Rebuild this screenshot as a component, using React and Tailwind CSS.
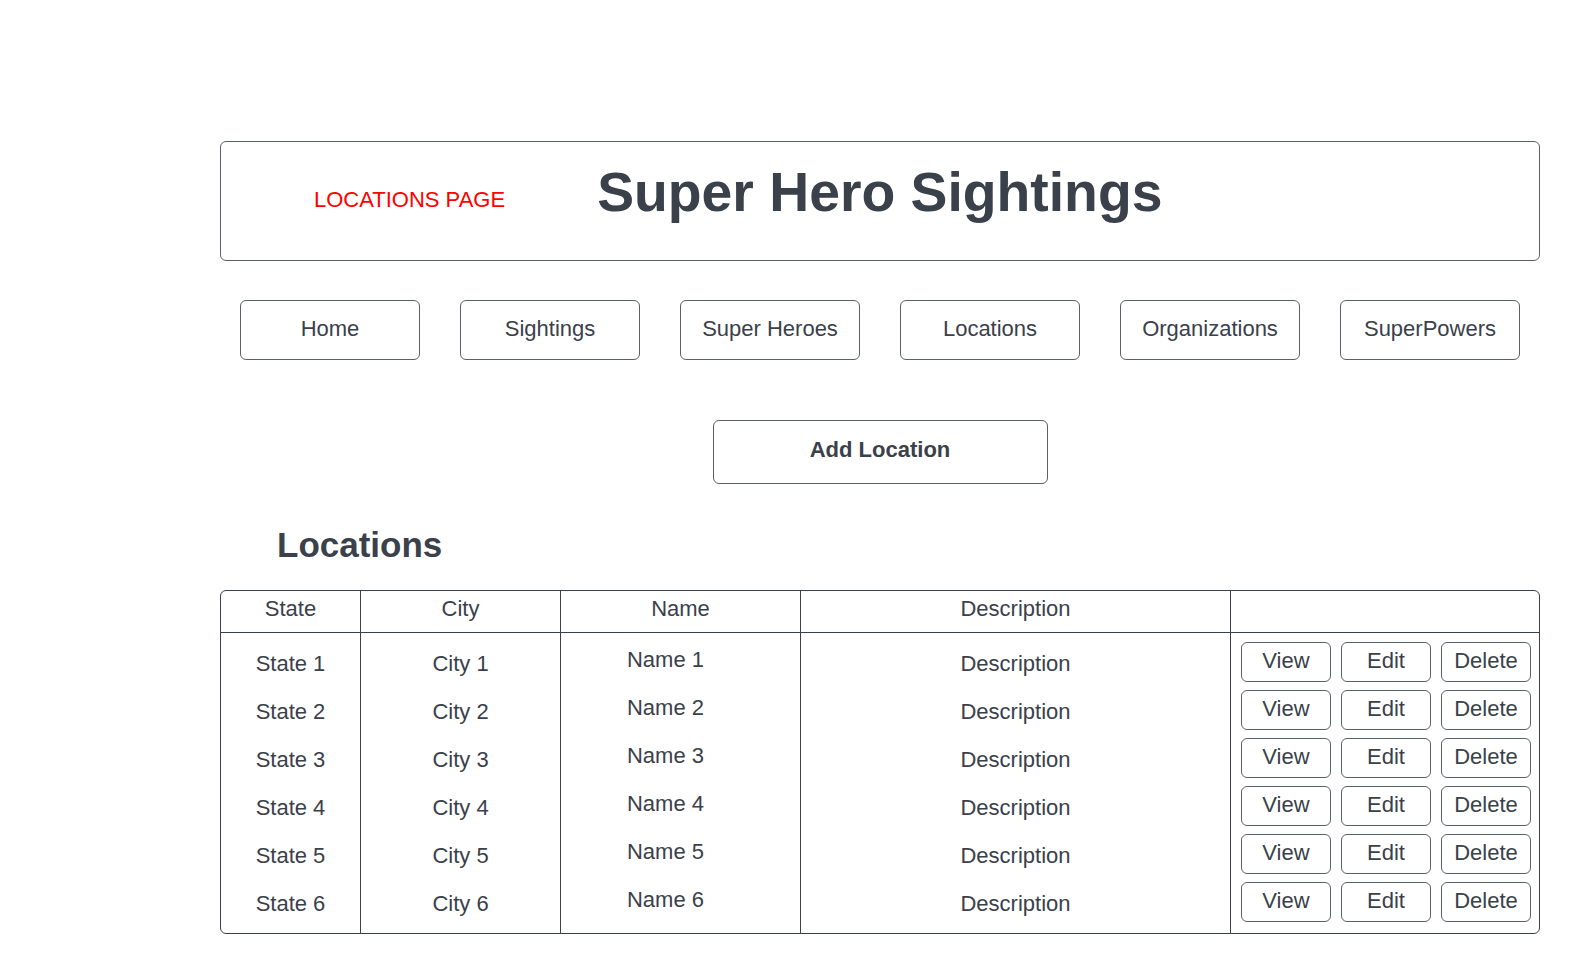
import React from "react";

const navItems = ["Home", "Sightings", "Super Heroes", "Locations", "Organizations", "SuperPowers"];

const rows = [1, 2, 3, 4, 5, 6].map((n) => ({
  state: `State ${n}`,
  city: `City ${n}`,
  name: `Name ${n}`,
  description: "Description",
}));

export default function App() {
  return (
    <div className="min-h-screen bg-white font-['Liberation_Sans',Arial,sans-serif] text-[#3a414a]">
      <div className="ml-[220px] w-[1320px] pt-[141px]">
        {/* header */}
        <div className="flex h-[120px] items-center rounded-md border border-[#5b616b] pl-[93px]">
          <span className="mb-[3px] text-[22px] text-[#ff0000]">LOCATIONS PAGE</span>
          <h1 className="mb-[18px] ml-[92px] text-[55.3px] font-bold">Super Hero Sightings</h1>
        </div>

        {/* nav */}
        <nav className="mt-[39px] flex gap-[40px] px-[20px]">
          {navItems.map((item) => (
            <button
              key={item}
              className="flex h-[60px] w-[180px] items-center justify-center rounded-md border border-[#5b616b] pb-[4px] text-[22px]"
            >
              {item}
            </button>
          ))}
        </nav>

        <div className="mt-[60px] flex justify-center">
          <button className="h-[64px] w-[335px] rounded-md border border-[#5b616b] pb-[6px] text-[22px] font-bold">
            Add Location
          </button>
        </div>

        <h2 className="mt-[39px] ml-[57px] text-[35px] font-bold leading-[44px]">Locations</h2>

        {/* table */}
        <div className="mt-[23px] overflow-hidden rounded-md border border-[#3a414a] text-[22px]">
          <div className="grid h-[42px] grid-cols-[140px_200px_240px_430px_1fr] border-b border-[#3a414a]">
            <div className="flex items-center justify-center border-r border-[#3a414a] pb-[6px]">State</div>
            <div className="flex items-center justify-center border-r border-[#3a414a] pb-[6px]">City</div>
            <div className="flex items-center justify-center border-r border-[#3a414a] pb-[6px]">Name</div>
            <div className="flex items-center justify-center border-r border-[#3a414a] pb-[6px]">Description</div>
            <div />
          </div>
          <div className="grid grid-cols-[140px_200px_240px_430px_1fr]">
            <div className="flex flex-col gap-[8px] border-r border-[#3a414a] pt-[10px] pb-[10px]">
              {rows.map((r) => (
                <div key={r.state} className="flex h-[40px] items-center justify-center">{r.state}</div>
              ))}
            </div>
            <div className="flex flex-col gap-[8px] border-r border-[#3a414a] pt-[10px] pb-[10px]">
              {rows.map((r) => (
                <div key={r.city} className="flex h-[40px] items-center justify-center">{r.city}</div>
              ))}
            </div>
            <div className="flex flex-col gap-[8px] border-r border-[#3a414a] pt-[6px] pb-[10px]">
              {rows.map((r) => (
                <div key={r.name} className="flex h-[40px] items-center justify-center pr-[30px]">{r.name}</div>
              ))}
            </div>
            <div className="flex flex-col gap-[8px] border-r border-[#3a414a] pt-[10px] pb-[10px]">
              {rows.map((r, i) => (
                <div key={i} className="flex h-[40px] items-center justify-center">{r.description}</div>
              ))}
            </div>
            <div className="flex flex-col gap-[8px] px-[10px] pt-[9px] pb-[10px]">
              {rows.map((r, i) => (
                <div key={i} className="flex gap-[10px]">
                  {["View", "Edit", "Delete"].map((label) => (
                    <button
                      key={label}
                      className="h-[40px] w-[90px] rounded-md border border-[#5b616b] pb-[4px] text-[22px]"
                    >
                      {label}
                    </button>
                  ))}
                </div>
              ))}
            </div>
          </div>
        </div>
      </div>
    </div>
  );
}
